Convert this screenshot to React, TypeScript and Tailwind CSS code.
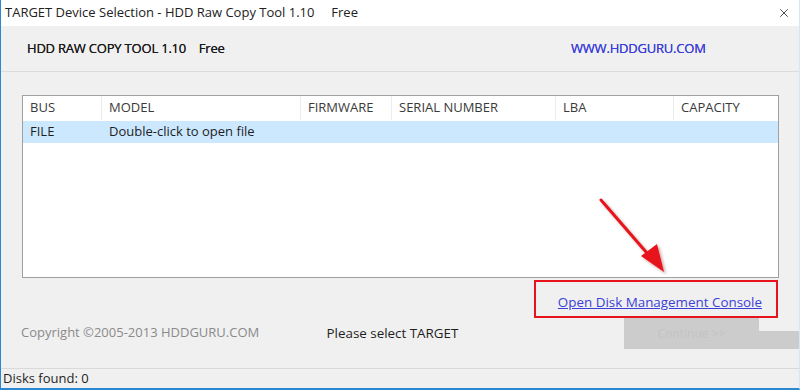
import { X } from "lucide-react";

const columns = [
  { label: "BUS", width: "w-[79px]" },
  { label: "MODEL", width: "w-[199px]" },
  { label: "FIRMWARE", width: "w-[91px]" },
  { label: "SERIAL NUMBER", width: "w-[164px]" },
  { label: "LBA", width: "w-[118px]" },
  { label: "CAPACITY", width: "flex-1" },
];

function RedArrow() {
  return (
    <svg
      className="absolute left-[590px] top-[190px] pointer-events-none"
      width="90"
      height="95"
      viewBox="0 0 90 95"
    >
      <defs>
        <filter id="sh" x="-20%" y="-20%" width="140%" height="140%">
          <feGaussianBlur stdDeviation="1.5" />
        </filter>
      </defs>
      <g opacity="0.35" filter="url(#sh)" transform="translate(2,2)">
        <line x1="10" y1="10" x2="62" y2="70" stroke="#600" strokeWidth="3" />
        <polygon points="73,82 50,66 66,54" fill="#600" />
      </g>
      <line x1="10" y1="10" x2="62" y2="70" stroke="#e8141c" strokeWidth="3" strokeLinecap="round" />
      <polygon points="73,82 50,66 66,54" fill="#e8141c" />
    </svg>
  );
}

export default function App() {
  return (
    <div
      className="relative w-[800px] h-[390px] bg-[#f0f0f0] border-l border-r border-l-[#2b87d0] border-r-[#d6e6f3] border-b-2 border-b-[#2b87d0] flex flex-col overflow-hidden text-[13px] text-[#1e1e1e]"
      style={{ fontFamily: "'Open Sans', 'Noto Sans', sans-serif" }}
    >
      {/* title bar */}
      <div className="h-[26px] bg-white flex items-center justify-between pl-[4px] pr-[8px] shrink-0">
        <span className="text-[13px] text-[#222] whitespace-pre">
          TARGET Device Selection - HDD Raw Copy Tool 1.10     Free
        </span>
        <X className="size-[14px] text-[#333]" strokeWidth={1.5} />
      </div>

      {/* header */}
      <div className="h-[46px] flex items-center pl-[26px] shrink-0 border-b border-[#dcdcdc]">
        <span className="w-[544px] text-[13px] text-[#1a1a1a] [text-shadow:0_0_0.25px_#1a1a1a] whitespace-pre tracking-[-0.2px]">
          HDD RAW COPY TOOL 1.10    Free
        </span>
        <span className="text-[13px] text-[#3b3fd8] [text-shadow:0_0_0.25px_#3b3fd8] tracking-[-0.2px]">WWW.HDDGURU.COM</span>
      </div>

      {/* device list */}
      <div className="mt-[23px] ml-[21px] mr-[20px] h-[183px] bg-white border border-[#a0a0a0] shrink-0">
        <div className="h-[25px] flex border-b border-white">
          {columns.map((c, i) => (
            <div
              key={c.label}
              className={`${c.width} flex items-center pl-[7px] text-[#3a3a3a] ${
                i < columns.length - 1 ? "border-r border-[#ececec]" : ""
              }`}
            >
              {c.label}
            </div>
          ))}
        </div>
        <div className="h-[22px] flex items-center bg-[#cce8ff]">
          <span className="w-[79px] pl-[7px]">FILE</span>
          <span className="pl-[7px]">Double-click to open file</span>
        </div>
      </div>

      {/* disk management link */}
      <div className="flex justify-end pr-[21px] mt-[2px] shrink-0">
        <div className="w-[244px] h-[38px] border-2 border-[#e8141c] flex items-end justify-end pr-[14px] pb-[5px]">
          <a className="text-[13.4px] text-[#3b3fd8] underline leading-[18px] cursor-pointer">
            Open Disk Management Console
          </a>
        </div>
      </div>

      {/* footer row */}
      <div className="h-[50px] flex items-start shrink-0">
        <span className="w-[326px] pl-[20px] pt-[5px] text-[#8a8a8a]">Copyright ©2005-2013 HDDGURU.COM</span>
        <span className="w-[298px] pt-[5px] text-[13.4px] text-[#1e1e1e]">Please select TARGET</span>
        <div className="flex items-end">
          <div className="w-[135px] h-[31px] bg-[#cccccc] flex items-center justify-center text-[#c3c3c3] text-[12px]">
            Continue &gt;&gt;
          </div>
          <div className="w-[40px] h-[18px] bg-[#cccccc]" />
        </div>
      </div>

      {/* status bar */}
      <div className="flex-1 border-t border-[#d9d9d9] flex items-center pl-[2px]">
        <span className="text-[#1e1e1e]">Disks found: 0</span>
      </div>

      <RedArrow />
    </div>
  );
}
